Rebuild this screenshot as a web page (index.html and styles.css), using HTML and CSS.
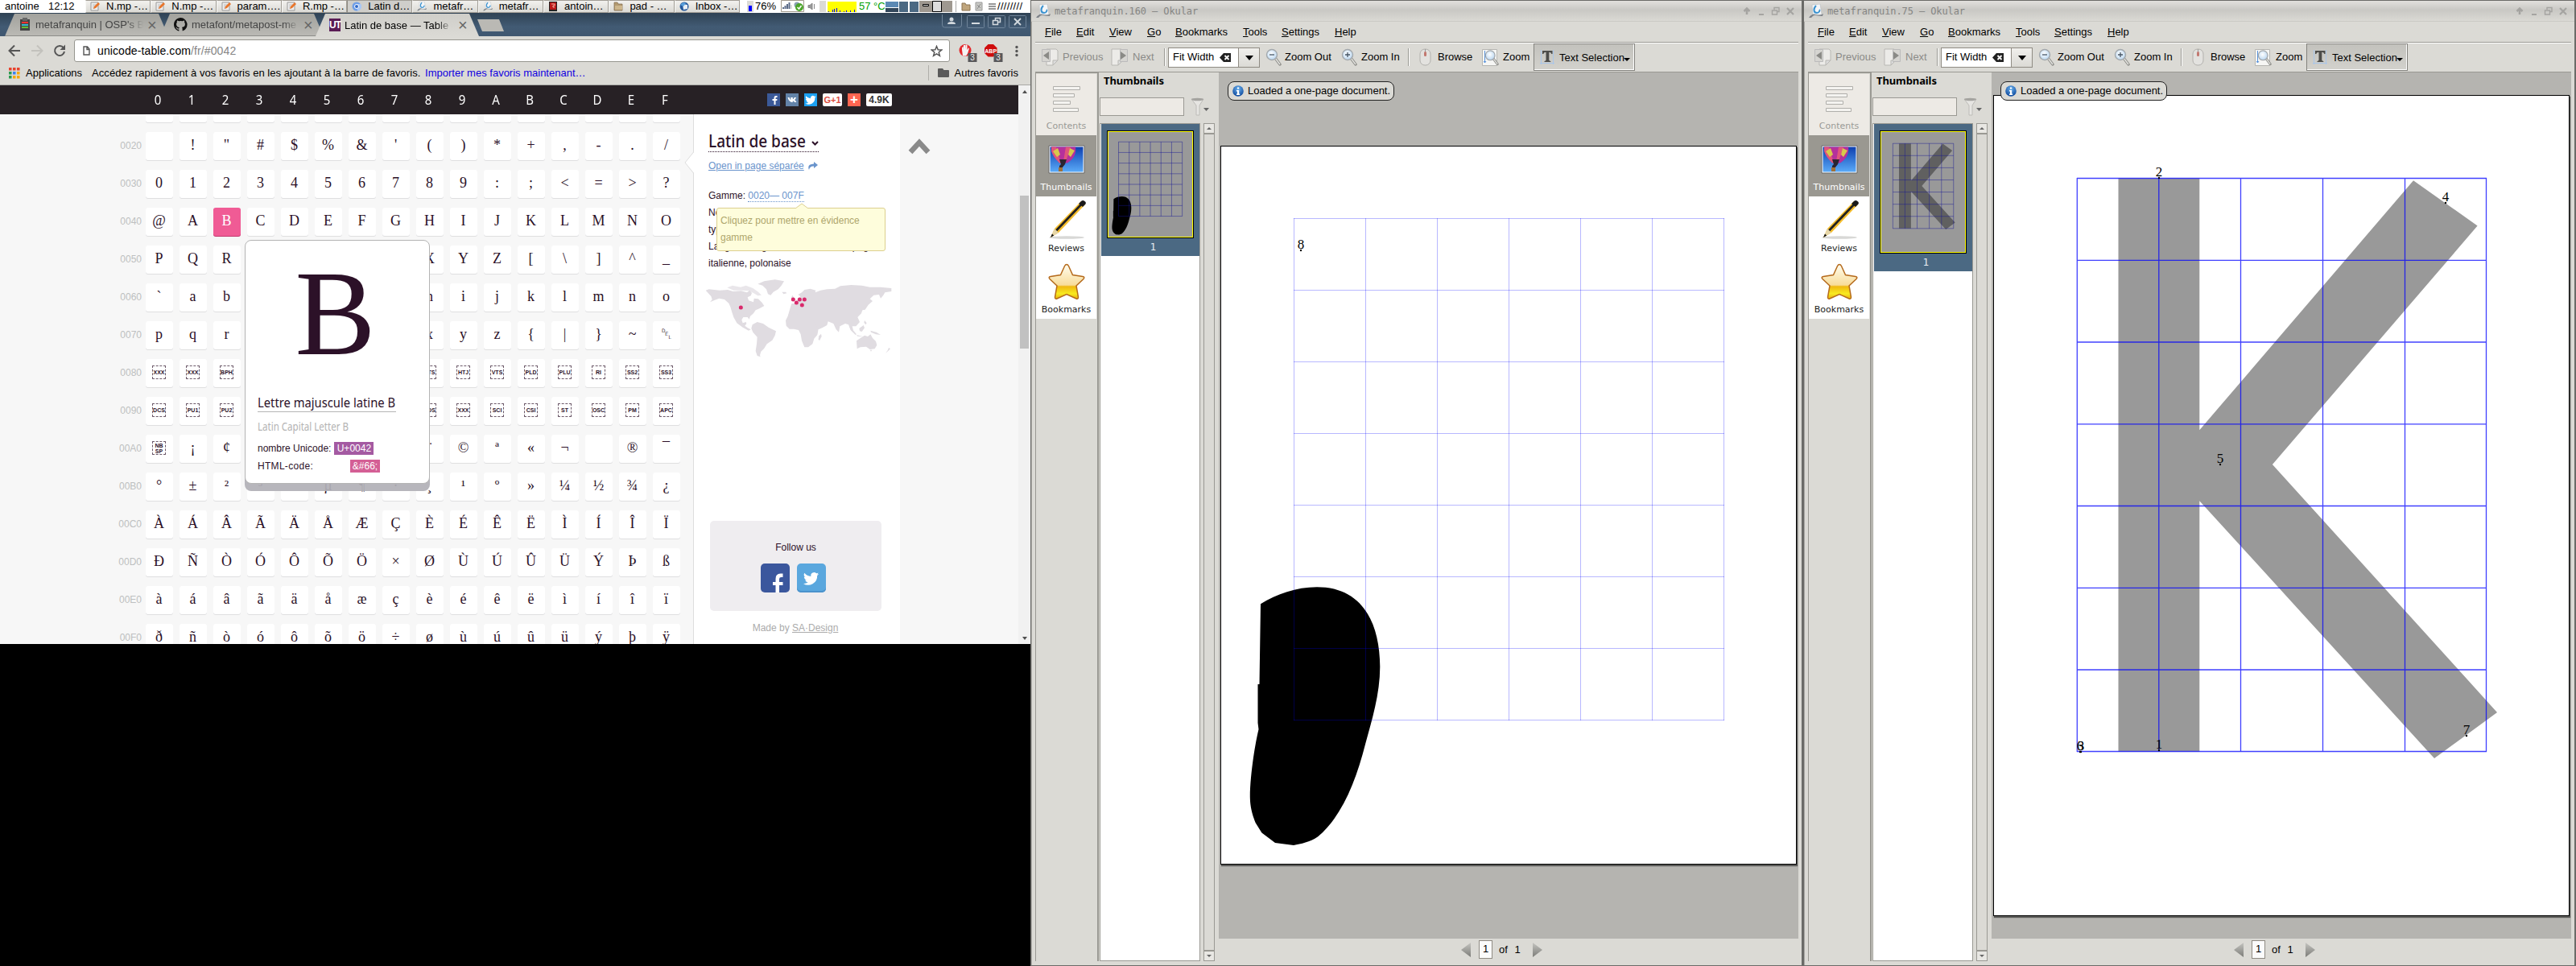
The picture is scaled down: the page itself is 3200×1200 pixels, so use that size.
FILE: index.html
```
<!DOCTYPE html>
<html lang="fr">
<head>
<meta charset="utf-8">
<title>Latin de base — Table</title>
<link rel="stylesheet" href="styles.css">
</head>
<body>
<svg class="defs" width="0" height="0">
  <defs>
    <linearGradient id="sky" x1="0" y1="0" x2="0" y2="1"><stop offset="0" stop-color="#0d3fb0"/><stop offset="1" stop-color="#5aaaf8"/></linearGradient>
    <linearGradient id="gold" x1="0" y1="0" x2="0" y2="1"><stop offset="0" stop-color="#fffdf0"/><stop offset=".6" stop-color="#f8dc9a"/><stop offset=".64" stop-color="#f0b810"/><stop offset=".85" stop-color="#f8ea20"/><stop offset="1" stop-color="#e8b010"/></linearGradient>
    <linearGradient id="steel" x1="0" y1="0" x2="0" y2="1"><stop offset="0" stop-color="#c4c4c0"/><stop offset="1" stop-color="#7c7c78"/></linearGradient>
    <radialGradient id="blue" cx=".5" cy=".3" r=".7"><stop offset="0" stop-color="#6cb2ee"/><stop offset="1" stop-color="#0c479c"/></radialGradient>
    <radialGradient id="lens" cx=".45" cy=".4" r=".6"><stop offset="0" stop-color="#fff"/><stop offset="1" stop-color="#b9d6f0"/></radialGradient>
  </defs>
  <symbol id="i-note" viewBox="0 0 12 12"><path d="M1 1h9v10H1z" fill="#eee" stroke="#999"/><path d="M3 4h5M3 6h4M3 8h3" stroke="#bbb"/><path d="M4 9l1-3 5-5 2 2-5 5z" fill="#e8762c"/></symbol>
  <symbol id="i-chromium" viewBox="0 0 12 12"><circle cx="6" cy="6" r="5.5" fill="#6f9fe8"/><path d="M6 3h5.2A5.5 5.5 0 0 1 7 11.4z" fill="#a9c8f5"/><circle cx="6" cy="6" r="2.5" fill="#3169c6" stroke="#fff"/></symbol>
  <symbol id="i-okular" viewBox="0 0 18 18"><path d="M4 1l10-1 2 13-11 1z" fill="#f4f6f8" stroke="#b8bcc0" stroke-width=".6"/><path d="M9 2C5 6 6 11 10 11c3 0 4-3 3-4" fill="none" stroke="#3c93cf" stroke-width="2"/><path d="M0 17q4-6 9-4t9-1l-1 3q-5 0-8-1t-6 3z" fill="#7d8288"/></symbol>
  <symbol id="i-red" viewBox="0 0 12 12"><path d="M1 0h10v12H1z" fill="#222"/><path d="M2 1h8v9H2z" fill="#b91818"/><path d="M4 3h4v2H6v2h2" stroke="#f7b0a0" fill="none"/></symbol>
  <symbol id="i-folder" viewBox="0 0 12 12"><path d="M1 1h4l1 2h5v8H1z" fill="#b39a70" stroke="#80694a" stroke-width=".7"/><path d="M2 5h9v5H2z" fill="#cdb68c"/></symbol>
  <symbol id="i-bird" viewBox="0 0 12 12"><circle cx="6" cy="6" r="5.5" fill="#24589c"/><path d="M4 3l6 1v5l-5 1z" fill="#e8eef5"/><path d="M1 4q3-4 7-2L5 6z" fill="#5aa0dc"/></symbol>
  <symbol id="i-tw" viewBox="0 0 24 24"><path fill="#fff" d="M22 6.2c-.7.3-1.500.5-2.300.6.8-.5 1.500-1.300 1.800-2.200-.8.5-1.700.8-2.600 1a4.100 4.100 0 0 0-7 3.700C8.500 9.100 5.500 7.500 3.500 5a4.100 4.100 0 0 0 1.300 5.500c-.7 0-1.300-.2-1.900-.5 0 2 1.400 3.700 3.300 4.100-.6.2-1.200.2-1.900.1.5 1.600 2 2.800 3.800 2.800A8.300 8.300 0 0 1 2 18.700 11.700 11.700 0 0 0 20 8.300c.8-.6 1.500-1.300 2-2.100z"/></symbol>
  <symbol id="i-zoom" viewBox="0 0 20 22"><path d="M12 12l6 8" stroke="#8c8c88" stroke-width="3.400" stroke-linecap="round"/><path d="M12 12l6 8" stroke="#e4e4e0" stroke-width="1.400"/><circle cx="8" cy="8" r="6.500" fill="url(#lens)" stroke="#a3a8ac" stroke-width="1.400"/></symbol>
  <symbol id="i-k-draw" viewBox="0 0 714 1018">
    <path class="ink" d="M154.500 102.500H255.300V415.200L521 105.300 600.600 161.500 345.900 458 625 765.900 547 823.100 255.300 503.200V814.500H154.500z"/>
    <path class="rules" d="M103 102.500H612M103 204.300H612M103 306H612M103 407.800H612M103 509.500H612M103 611.300H612M103 713H612M103 814.500H612M103.300 102V815M204.800 102V815M306.500 102V815M408.500 102V815M510.500 102V815M611.500 102V815"/>
  </symbol>
  <symbol id="i-blob-draw" viewBox="0 0 714 891">
    <path class="ink" d="M49 568.300C69 556 93 547.300 119 547.300c54 0 78 41 78.300 99 0 34-10.300 67-18 95.300-12.300 48.700-30.300 91.700-59.100 115.700-10.200 7-21.200 9-30.200 10.700L67 865 50.400 852.600 42.600 840C37 826 36 817 35.800 808 36 778 43 738 46.500 724L45.500 716V668H47.500z"/>
    <path class="rules" d="M90 89.500H625M90 178.500H625M90 267.500H625M90 356.500H625M90 445.500H625M90 534.500H625M90 623.500H625M90 712.500H625M90.500 89V713M179.500 89V713M268.500 89V713M357.500 89V713M446.500 89V713M535.500 89V713M624.500 89V713"/>
  </symbol>
</svg>

<main class="desktop">
  <section class="browser">
    <header class="taskbar">
      <span class="user">antoine</span><span class="clock">12:12</span>
      <nav class="tasks">
        <span class="task"><svg><use href="#i-note"/></svg>N.mp -…</span>
        <span class="task"><svg><use href="#i-note"/></svg>N.mp -…</span>
        <span class="task"><svg><use href="#i-note"/></svg>param….</span>
        <span class="task"><svg><use href="#i-note"/></svg>R.mp -…</span>
        <span class="task on"><svg><use href="#i-chromium"/></svg>Latin d…</span>
        <span class="task"><svg><use href="#i-okular"/></svg>metafr…</span>
        <span class="task"><svg><use href="#i-okular"/></svg>metafr…</span>
        <span class="task"><svg><use href="#i-red"/></svg>antoin…</span>
        <span class="task"><svg><use href="#i-folder"/></svg>pad - …</span>
        <span class="task"><svg><use href="#i-bird"/></svg>Inbox -…</span>
      </nav>
      <span class="battery"></span><span class="pct">76%</span>
      <svg class="net" width="46" height="16" viewBox="0 0 46 16"><path d="M.5.500h28v14H.5z" fill="#fff" stroke="#a19a8c"/><path d="M3 11V9M5.500 11V7M8 11V5M10.500 11V3" stroke="#5c6c88" stroke-width="2"/><path d="M13 11V6" stroke="#bbb"/><circle cx="20" cy="6" r="3.500" fill="#8aa0b4"/><circle cx="23" cy="9" r="5" fill="#4da52c"/><path d="M20.500 9l2 2 3-4" stroke="#fff" fill="none" stroke-width="1.500"/><path d="M34 6.500h2l3-2.500v8l-3-2.500h-2zM41.500 5v6" fill="#999" stroke="#888"/></svg>
      <span class="meter"></span>
      <svg class="cpu" width="36" height="13" viewBox="0 0 36 13"><path fill="#ff0" d="M0 0h36v13H0z"/><path d="M1.500 12v1M6.500 10v3M8.500 9v4M11.500 8v5M15.500 11v2M20.500 12v1M23.500 11v2M28.500 11v2M33.500 10v3" stroke="#00f"/></svg>
      <span class="temp">57 °C</span>
      <svg class="pager" width="84" height="16" viewBox="0 0 84 16"><path fill="#5b89b4" d="M0 2h16v7H0z"/><path fill="#33475b" d="M0 10h16v5H0z"/><path fill="#4b6983" d="M17 2h11v13H17zM30 2h11v13H30z"/><path fill="#9e9890" d="M42 1h41v14H42z"/><path d="M46.500 5.500h7v2h-7z" fill="#ddd" stroke="#000"/><path d="M58.500 1.500h11v13h-11z" fill="#ddd" stroke="#000"/></svg>
      <svg class="tray" width="54" height="14" viewBox="0 0 54 14"><path d="M1.500 0v14" stroke="#aaa"/><path d="M9 3h4l1 2h5v7H9z" fill="#bfa57c" stroke="#8a7350"/><path d="M26 2h8v10h-8z" fill="#c8c8c4" stroke="#999"/><path d="M28 5l4 4M32 4l-4 6" stroke="#888"/><path d="M42 4h9M42 7h9M42 10h9" stroke="#777" stroke-width="1.700"/></svg>
      <span class="slashes">////////</span>
    </header>

    <div class="tabs">
      <div class="tab t1"><svg width="16" height="17" viewBox="0 0 16 17"><path d="M2 2h12v14H2z" fill="#444"/><path d="M5 0h6v4H5z" fill="#666"/><path d="M4 6h8" stroke="#e33" stroke-width="2"/><path d="M4 9h8" stroke="#3bc" stroke-width="2"/><path d="M4 12h8" stroke="#6b3" stroke-width="2"/></svg><span>metafranquin | OSP's B</span><i>×</i></div>
      <div class="tab t2"><svg width="17" height="17" viewBox="0 0 16 16"><path d="M8 0C3.600 0 0 3.600 0 8c0 3.500 2.300 6.500 5.500 7.600.4.100.5-.2.500-.4v-1.500c-2.200.5-2.700-1-2.700-1-.4-.9-.9-1.200-.9-1.200-.7-.5.1-.5.1-.5.8.1 1.200.8 1.200.8.7 1.300 1.900.9 2.300.7.1-.5.300-.9.500-1.100-1.800-.2-3.600-.9-3.600-4 0-.9.300-1.600.8-2.100-.1-.2-.4-1 .1-2.100 0 0 .7-.2 2.200.8a7.600 7.600 0 0 1 4 0c1.500-1 2.200-.8 2.200-.8.4 1.100.2 1.900.1 2.100.5.6.8 1.300.8 2.100 0 3.100-1.900 3.700-3.700 3.900.3.300.6.800.6 1.500v2.200c0 .2.100.5.600.4A8 8 0 0 0 8 0z" fill="#111"/></svg><span>metafont/metapost-me</span><i>×</i></div>
      <div class="tab t3"><b class="ut">UT</b><span>Latin de base — Table</span><i>×</i></div>
      <div class="newtab"></div>
      <div class="wbtns">
        <svg width="106" height="20" viewBox="0 0 106 20"><g fill="none" stroke="#70859a"><path d="M.5 0v13q0 3 3 3h18q3 0 3-3V0"/><rect x="31.500" y="1.500" width="21" height="15" rx="1"/><rect x="57.500" y="1.500" width="21" height="15" rx="1"/><rect x="83.500" y="1.500" width="21" height="15" rx="1"/></g><circle cx="12" cy="6" r="2.500" fill="#d0d6dc"/><path d="M7 12q0-3 5-3t5 3z" fill="#d0d6dc"/><path d="M37 11h10" stroke="#d5dbe0" stroke-width="2"/><path d="M63.500 7.500h6v5h-6zM66.500 7V4.500h6v5H70" fill="none" stroke="#d5dbe0" stroke-width="1.500"/><path d="M90 5l8 8M98 5l-8 8" stroke="#d5dbe0" stroke-width="1.800"/></svg>
      </div>
    </div>

    <div class="toolbar">
      <svg class="nav" width="92" height="32" viewBox="0 0 92 32"><g fill="none" stroke-width="2"><path d="M25 18H12M18 11.500L11.500 18l6.500 6.500" stroke="#555"/><path d="M39 18h13M46 11.500l6.500 6.500-6.500 6.500" stroke="#c3c2bd"/><path d="M79 14.500A6 6 0 1 0 80 19" stroke="#555"/></g><path d="M81 10.500v6.500h-6.500z" fill="#555"/></svg>
      <div class="urlbar">
        <svg width="9" height="12" viewBox="0 0 9 12"><path d="M1 1h4.500L8 4v7H1zM5 1v3.500h3" fill="none" stroke="#555" stroke-width="1.400"/></svg>
        <span>unicode-table.com<em>/fr/#0042</em></span>
        <svg class="fav" width="15" height="15" viewBox="0 0 15 15"><path d="M7.500 1.500l1.700 4.200 4.500.3-3.500 2.900 1.200 4.400-3.900-2.500-3.900 2.500 1.200-4.400L1.300 6l4.500-.3z" fill="none" stroke="#555" stroke-width="1.500"/></svg>
      </div>
      <svg class="exts" width="100" height="32" viewBox="0 0 100 32"><circle cx="19" cy="17.500" r="7.500" fill="#e3282c"/><path d="M15 17v-3l1.500-1V17l.500-6h2v5l.5-5.500h2V17l1.500-2.500 1 .5-2 6.500-2 3h-4z" fill="#f4f4f4"/><path d="M22.500 21h11v11h-11z" fill="#58585a"/><path d="M47.500 10h6.500l4.500 4.500V21L54 25.500h-6.500L43 21v-6.500z" fill="#cf0c0c"/><text x="50.700" y="20.500" font-size="7" text-anchor="middle" class="abp">ABP</text><path d="M54.500 21h11v11h-11z" fill="#58585a"/><text x="25.300" y="30" class="cnt">3</text><text x="57.300" y="30" class="cnt">3</text><g fill="#555"><circle cx="83" cy="13.500" r="1.700"/><circle cx="83" cy="18.500" r="1.700"/><circle cx="83" cy="23.500" r="1.700"/></g></svg>
    </div>

    <div class="bookmarks">
      <svg width="14" height="14" viewBox="0 0 14 14"><path fill="#e8432e" d="M0 0h3.500v3.500H0zM5 0h3.500v3.500H5zM10 0h3.500v3.500H10z"/><path fill="#2a9a4e" d="M0 5h3.500v3.500H0zM0 10h3.500v3.500H0z"/><path fill="#3a82f0" d="M5 5h3.500v3.500H5z"/><path fill="#f6a800" d="M10 5h3.500v3.500H10zM5 10h3.500v3.500H5zM10 10h3.500v3.500H10z"/></svg>
      <span class="apps">Applications</span><span class="hint">Accédez rapidement à vos favoris en les ajoutant à la barre de favoris.</span><a>Importer mes favoris maintenant…</a>
      <span class="others"><svg width="14" height="13" viewBox="0 0 14 13"><path d="M0 2q0-1 1-1h5l1.500 2H13q1 0 1 1v7q0 1-1 1H1q-1 0-1-1z" fill="#5a5a5a"/></svg>Autres favoris</span>
    </div>

    <div class="viewport">
      <div class="site">
        <header class="hexbar">
          <div class="hex" id="hex"></div>
          <div class="share">
            <span class="s-fb"><svg width="16" height="16" viewBox="0 0 16 16"><path d="M8.500 14V9H6.500V7h2V5.300Q8.500 3 11 3h1.500v2h-1.200q-.8 0-.8.800V7h2l-.3 2h-1.700v5z" fill="#fff"/></svg></span>
            <span class="s-vk"><svg width="16" height="16" viewBox="0 0 16 16"><path d="M2.500 5h2q1 3 1.800 3.200V5h2.500v2.600Q9.900 7 10.800 5h2.200q-.5 1.800-1.900 3.100 1.500 1 2.300 2.900H11q-.8-1.600-2.200-1.800V11Q4 11 2.500 5z" fill="#fff"/></svg></span>
            <span class="s-tw"><svg width="16" height="16"><use href="#i-tw"/></svg></span>
            <span class="s-g">G+1</span><span class="s-plus">+</span><span class="s-count">4.9K</span>
          </div>
        </header>
        <div class="content">
          <div class="table" id="table"></div>
          <aside class="side">
            <svg class="notch" width="12" height="26" viewBox="0 0 12 26"><path d="M12 0L1 13l11 13z" fill="#fff"/><path d="M11.500 0L1 13l10.500 13" fill="none" stroke="#ddd"/></svg>
            <svg class="h-title" width="160" height="26"><text x="0" y="20" font-size="22.500" textLength="121" lengthAdjust="spacingAndGlyphs">Latin de base</text><path d="M129 13l3.500 3.500L136 13" fill="none" stroke="#2c1128" stroke-width="2"/><path d="M0 25.500h137" stroke="#2c1128" stroke-dasharray="1 1"/></svg>
            <p class="open"><a>Open in page séparée</a><svg width="12" height="11" viewBox="0 0 12 11"><path d="M7 0l5 4-5 4V5.500Q2 5 1 10-2 3 7 2.500z" fill="#6a94cc"/></svg></p>
            <p class="info">Gamme: <a>0020— 007F</a><br>Nombre de caractères: 96<br>type: alphabet<br>Langues: anglaise, allemande, espag<br>italienne, polonaise</p>
            <div class="tip"><svg width="16" height="7" viewBox="0 0 16 7"><path d="M0 7l8-6 8 6" fill="#fefddc" stroke="#dccf8e"/></svg>Cliquez pour mettre en évidence gamme</div>
            <svg class="map" width="240" height="100" viewBox="30 592 720 300">
              <g fill="#e0dce1">
                <path d="M50 636l12-4 40 4 30-2 20 6 30-2 22 6 10-8 8 10-4 10-12 6 4 12 18 6 2-14 16 2 14 14 8 12-18 10-14 6-8 12-12 10-4 12-6-8-16 0-6 10 4 12 12-4 2 6-6 8 10 8 12 6-8 4-22-12-22-16-12-22-6-18-6-20-6-14-16-14-20-4-16 6-18 8 8-10-4-12z"/>
                <path d="M130 626l20-8 30 6 20-6 26 10 20 14 12 12-14 2-16-10-18-8-30-2-26 0z" opacity=".7"/>
                <path d="M244 612l24-10 40-6 34 6-10 16-12 14-18 10-10 12-10-4-6-18-14-14z"/>
                <path d="M334 642l14 0 4 5-12 3z"/>
                <path d="M224 764l18-10 22 6 20 14 28 14-4 16-10 18-20 14-10 16-12 12-4 14 2 6-12-4-6-18 4-26 2-26-16-18-6-14z"/>
                <path d="M366 712l22-8 24 2 22 12 24-2 8 14 12 18 18-2-6 14-20 20-4 22-12 14-6 20-16 12-14 0-10-24-4-24-8-16-18-4-16 0-12-12-2-20z"/>
                <path d="M472 806l8-8 2 10-8 16-4-6z"/>
                <path d="M366 698l4-12 14-2 6-10 14-10-4-8-6-4 14-8 10-10 22-4 20 6-2 8 20-8 24-4 30-2 20-10 40-4 40 2 30 6 40 0 40 4 0 12-24 4-6 10-10 12-6-14-20 2-14 14 10 8-16 14-12 18-10 2-4 12-14 14 8 18-14 16-14 0 6 24-12-10-8-20-12-4-20 10-4 22-10-10-10-22-20-8-4 14-18 10-14 6-12-24-10-12-6-8-20-4 0-10-12 0-10 8-8-6-10-8-12 6-14 8z"/>
                <path d="M368 664l6-10 8 18-10 4z"/>
                <path d="M584 768l20 22 8 10-4 2-16-16zM612 802l24 6-20-1zM622 778l16-12 4 10-10 14-8-2zM664 786l22 6 16 10-18-2-18-8zM642 748l8 10-4 6-6-8z"/>
                <path d="M612 824l18-12 12-8 12 4 10-8 8 14 12 12 4 14-8 14-18 2-14-10-22 2-12 6z"/>
                <path d="M662 858l8 0-4 6zM732 850l6 4-8 8-10 8 8-10zM630 712l14-10 4-14-6 4z"/>
              </g>
              <g fill="#d92a6c"><circle cx="181" cy="700" r="7.500"/><circle cx="376" cy="670" r="7.500"/><circle cx="400" cy="670" r="7.500"/><circle cx="418" cy="670" r="7.500"/><circle cx="388" cy="682" r="7.500"/><circle cx="409" cy="691" r="7.500"/></g>
            </svg>
            <div class="follow"><p>Follow us</p><div class="fbtns">
              <span class="f-fb"><svg width="36" height="36" viewBox="0 0 36 36"><path d="M18.500 36V27H15v-4h3.500v-4q0-6.500 6-6.500h3V17h-2q-2.500 0-2.500 2.300V23h4.500v4H23v9z" fill="#fff"/></svg></span>
              <span class="f-tw"><svg width="23" height="23"><use href="#i-tw"/></svg></span></div></div>
            <p class="made">Made by <a>SA·Design</a></p>
          </aside>
          <svg class="totop" width="28" height="20" viewBox="0 0 28 20"><path d="M3 17L14 5l11 12" fill="none" stroke="#8a8a8a" stroke-width="6.500"/></svg>
        </div>
        <div class="popup">
          <div class="big">B</div>
          <svg class="p-title" width="172" height="24"><text x="0" y="18" font-size="17" textLength="171" lengthAdjust="spacingAndGlyphs">Lettre majuscule latine B</text><path d="M0 23.500h172" stroke="#b5b5b5"/></svg>
          <svg class="p-sub" width="172" height="22"><text x="0" y="17" font-size="14.500" textLength="113" lengthAdjust="spacingAndGlyphs">Latin Capital Letter B</text></svg>
          <p><span>nombre Unicode:</span><b class="uni">U+0042</b></p>
          <p><span class="lbl">HTML-code:</span><b class="ent">&amp;#66;</b></p>
        </div>
      </div>
      <div class="scroll"><i class="up"></i><i class="thumb"></i><i class="down"></i></div>
    </div>
  </section>
  <section class="okular" data-name="metafranquin.160" data-doc="blob"></section>
  <section class="okular" data-name="metafranquin.75" data-doc="k"></section>
</main>
<script src="app.js"></script>
</body>
</html>
```
FILE: styles.css
```
* { box-sizing: border-box; }
body { margin: 0; background: #000; font: 13px "Liberation Sans", Arial, sans-serif; color: #000; overflow: hidden; }
p { margin: 0; }
svg { display: block; flex: none; }
.defs { position: absolute; }
.desktop { display: flex; width: 3200px; height: 1200px; align-items: flex-start; white-space: nowrap; }

/* taskbar */
.browser { width: 1280px; height: 800px; display: flex; flex-direction: column; overflow: hidden; flex: none; }
.taskbar { height: 16px; background: #fff; display: flex; align-items: center; flex: none; line-height: 16px; }
.user { width: 60px; padding-left: 6px; }
.clock { width: 46px; }
.tasks { display: flex; width: 813px; }
.task { flex: 1; min-width: 0; height: 16px; line-height: 14px; background: linear-gradient(#f2f1ee, #dbdad5); border: 1px solid #a19d95; border-left-color: #f8f8f6; display: flex; align-items: center; padding-left: 5px; gap: 8px; overflow: hidden; }
.task svg { width: 12px; height: 12px; }
.task.on { background: #cfceca; border-left-color: #8f8b83; }
.battery { width: 8px; height: 14px; margin-left: 9px; background: linear-gradient(#00f, #00f) 2px 6px / 4px 7px no-repeat #dbdad5; }
.pct { width: 35px; padding-left: 2px; }
.net { margin-left: -1px; }
.meter { width: 8px; height: 14px; background: #dbdad5; margin-left: 2px; }
.cpu { margin-left: 2px; margin-top: 1px; }
.temp { color: #00a000; padding-left: 3px; width: 36px; }
.tray { margin-left: 2px; }
.slashes { letter-spacing: 0.300px; margin-left: -1px; }

/* tabs */
.tabs { height: 29px; background: linear-gradient(#2f4254, #425b74 60%, #3f5770); display: flex; flex: none; padding-left: 6px; position: relative; }
.tab { display: flex; align-items: center; height: 28px; margin-top: 1px; width: 206px; padding: 0 20px 0 17px; margin-right: -13px; clip-path: polygon(0 100%, 12px 0, 191px 0, 203px 100%); background: linear-gradient(#a2a29d, #bab9b4); color: #444; border-bottom: 1px solid #8c8c88; }
.tab span { width: 134px; overflow: hidden; margin-left: 5px; flex: none; mask-image: linear-gradient(90deg, #000 85%, transparent); }
.tab i { font: 20px/20px "Liberation Sans", sans-serif; color: #666; margin-left: 5px; }
.t3 { background: linear-gradient(#cfcec9, #dbdad5); color: #000; border: 0; z-index: 2; }
.t3 i { margin-left: 7px; }
.ut { width: 16px; height: 16px; background: #5a1c55; color: #fff; font-size: 12px; line-height: 16px; text-align: center; letter-spacing: -1px; }
.newtab { width: 35px; height: 15px; margin: 8px 0 0 8px; background: #bab9b4; clip-path: polygon(0 0, 27px 0, 33px 100%, 6px 100%); }
.wbtns { margin: 2px 4px 0 auto; }

/* toolbar */
.toolbar { height: 33px; background: #dbdad5; display: flex; flex: none; }
.nav { margin-top: 0; }
.urlbar { width: 1088px; height: 28px; margin-top: 4px; background: #fff; border: 1px solid #96968f; border-radius: 3px; display: flex; align-items: center; font-size: 14px; padding: 0 8px 0 10px; line-height: 26px; }
.urlbar span { margin-left: 9px; letter-spacing: .1px; }
.urlbar em { font-style: normal; color: #858585; }
.fav { margin-left: auto; }
.abp { fill: #fff; font-weight: bold; }
.cnt { fill: #eee; font-size: 10px; }
.bookmarks { height: 28px; background: #dbdad5; border-bottom: 1px solid #a8a8a4; display: flex; align-items: center; padding: 0 15px 2px 11px; flex: none; }
.apps { margin: 0 12px 0 7px; }
.hint { width: 409px; letter-spacing: .04px; }
.bookmarks a { color: #1000e0; margin-left: 5px; }
.others { margin-left: auto; height: 19px; display: flex; align-items: center; gap: 7px; border-left: 1px solid #b0afaa; padding-left: 11px; }

/* site */
.viewport { flex: 1; display: flex; min-height: 0; }
.site { width: 1265px; background: #f7f7f7; position: relative; overflow: hidden; display: flex; flex-direction: column; }
.hexbar { height: 36px; background: #272125; display: flex; align-items: center; flex: none; position: relative; z-index: 1; }
.hex { display: flex; padding-left: 175px; width: 953px; color: #fff; font: 17px/34px "Noto Sans", sans-serif; }
.hex span { width: 42px; text-align: center; transform: scaleX(.88); }
.share { display: flex; height: 16px; line-height: 16px; margin-top: -1px; }
.share span { width: 16px; margin-right: 7px; text-align: center; font-weight: bold; }
.s-fb { background: #3b5998; } .s-vk { background: #6383a8; } .s-tw { background: #1da1f2; }
.share .s-g { width: 24px; background: #fff; color: #dc4e41; border-radius: 2px; font-size: 11px; }
.s-plus { background: #ff6550; color: #fff; font-size: 17px; }
.share .s-count { width: 32px; background: #fff; color: #333; border-radius: 2px; font-size: 12px; }
.content { display: flex; flex: 1; }
.table { width: 861px; margin-top: -25px; display: flex; flex-direction: column; gap: 11px; }
.row { display: flex; gap: 8px; height: 36px; }
.row > span { width: 176px; margin-right: -3px; text-align: right; color: #bdbfc0; font-size: 12px; line-height: 34px; }
.row > b { width: 34px; height: 35px; background: #fff; border-radius: 3px; box-shadow: 0 1px 0 #dfdfe0; font: 18px/33px "Liberation Serif", serif; color: #2c1128; text-align: center; padding-right: 1px; }
.row > b.on { background: #f05b95; color: #fff; box-shadow: 0 1px 0 #c23a70; }
.row > b.ctl { display: flex; align-items: center; justify-content: center; padding: 0 1px 2px 0; }
.ctl i { width: 17px; height: 17px; border: 1px dashed #6d5a6a; font: bold 7px/15px "Liberation Sans", sans-serif; display: flex; align-items: center; justify-content: center; }
.ctl i.two { line-height: 7px; white-space: normal; }
.side { width: 257px; background: #fff; border-left: 1px solid #ddd; position: relative; color: #2c1128; font-size: 12px; padding-left: 18px; }
.notch { position: absolute; left: -12px; top: 47px; }
.h-title { margin-top: 21px; fill: #2c1128; font-family: "Noto Sans", sans-serif; font-weight: 500; }
.side a { color: #6a94cc; }
.open { display: flex; line-height: 20px; margin-top: 7px; gap: 5px; align-items: center; }
.open a, .made a { text-decoration: underline; }
.info { line-height: 21px; margin-top: 17px; }
.info a { border-bottom: 1px dotted #6a94cc; }
.tip { position: absolute; left: 28px; top: 116px; width: 210px; height: 54px; padding: 5px 4px; background: #fefddc; border: 1px solid #dccf8e; border-radius: 3px; color: #aea66c; line-height: 21px; white-space: normal; }
.tip svg { position: absolute; left: 97px; top: -7px; }
.map { margin: 8px 0 0 -10px; }
.follow { margin: 201px 0 0 2px; width: 213px; height: 112px; background: #efedf0; border-radius: 5px; text-align: center; padding-top: 22px; }
.follow p { line-height: 22px; }
.fbtns { display: flex; gap: 9px; justify-content: center; margin: 9px 7px 0 0; }
.fbtns span { width: 36px; height: 36px; border-radius: 5px; display: flex; align-items: center; justify-content: center; overflow: hidden; }
.f-fb { background: #3b579d; }
.f-tw { background: #5aa7de; box-shadow: inset 0 -2px 0 #4b93cc; }
.made { text-align: center; margin: 10px 22px 0 0; line-height: 22px; color: #ababab; }
.side .made a { color: #ababab; }
.totop { margin: 30px 0 0 10px; }
.popup { position: absolute; left: 304px; top: 192px; width: 230px; height: 303px; background: #fff; border: 1px solid #b4b4b4; border-radius: 8px; box-shadow: 0 9px 0 rgba(178,176,183,.93); padding: 0 15px; color: #2c1128; font-size: 12px; }
.popup svg { font-family: "Noto Sans", sans-serif; fill: #2c1128; }
.big { height: 181px; line-height: 180px; font-family: "Liberation Serif", serif; font-size: 150px; text-align: center; padding-right: 5px; }
.p-title { margin-top: 8px; }
.popup .p-sub { fill: #b3b3b3; margin-top: 6px; }
.popup p { display: flex; align-items: center; height: 22px; margin-top: 6px; }
.popup p + p { margin-top: 0; }
.popup b { font-weight: normal; color: #fff; line-height: 16px; height: 16px; text-align: center; margin-left: 4px; width: 49px; }
.uni { background: #a45aa2; }
.popup .ent { background: #d45f95; width: 37px; margin-left: 0; }
.lbl { width: 115px; letter-spacing: 0.300px; }
.scroll { width: 15px; background: #f1f1f1; display: flex; flex-direction: column; align-items: center; }
.up, .down { border: 3.500px solid transparent; width: 0; }
.up { border-bottom: 4px solid #505050; border-top: 0; margin-top: 6px; }
.thumb { width: 11px; height: 190px; background: #c1c1c1; margin-top: 127px; }
.down { border-top: 4px solid #505050; border-bottom: 0; margin-top: auto; margin-bottom: 5px; }

/* document viewer */
.okular { width: 960px; height: 1200px; background: #dbdad5; border: 1px solid #6b6b68; border-right-width: 2px; padding-left: 5px; display: flex; flex-direction: column; flex: none; box-shadow: inset 1px 0 0 #a9a8a4; }
.title { height: 26px; margin-left: -5px; padding: 0 9px 0 6px; background: linear-gradient(#e2e0dd, #c9c8c4 45%, #dad9d4); border-bottom: 1px solid #cbcac5; display: flex; align-items: center; gap: 5px; font: 12px/26px "DejaVu Sans Mono", monospace; letter-spacing: -.1px; color: #858583; flex: none; }
.title .wm { margin-left: auto; }
.menu { height: 26px; display: flex; padding-left: 12px; margin-right: 4px; border-bottom: 1px solid #9a9993; box-shadow: 0 1px 0 #fff; line-height: 25px; flex: none; }
.menu span { display: block; }
.menu span::first-letter { text-decoration: underline; }
.tools { height: 37px; display: flex; align-items: center; border-bottom: 1px solid #9a9993; margin-right: 4px; flex: none; line-height: 34px; }
.tools .dim { color: #8b8b88; }
.sep { width: 1px; height: 22px; background: #9a9993; box-shadow: 1px 0 0 #fff; }
.combo { width: 114px; height: 25px; border: 1px solid #8f8b83; display: flex; background: #fff; align-items: center; line-height: 22px; padding-left: 5px; margin-left: 4px; }
.combo svg { margin-left: 7px; }
.combo i { width: 26px; height: 23px; margin-left: auto; background: linear-gradient(#f0efec, #dbdad5); border-left: 1px solid #8f8b83; }
.combo i::after { content: ""; display: block; margin: 9px 0 0 8px; width: 0; border: 5px solid transparent; border-top: 6px solid #000; border-bottom: 0; }
.textsel { width: 126px; height: 34px; border: 1px solid #84837e; background: linear-gradient(#c3c2bd, #d3d2cd); box-shadow: inset -1px -1px 0 #fff; display: flex; align-items: center; line-height: 31px; padding-left: 7px; margin-left: 5px; }
.textsel span { margin-left: 6px; }
.textsel i { width: 0; border: 4px solid transparent; border-top: 4px solid #000; border-bottom: 0; margin: 5px 0 0 -1px; }
.body { flex: 1; display: flex; min-height: 0; margin-right: 4px; }
.modes { width: 79px; border: 1px solid #9a9993; border-bottom: 0; border-right: 2px solid #9a9993; padding: 1px 1px 0 0; margin-bottom: 5px; }
.mode { height: 76px; width: 75px; background: #fff; font: 11px "DejaVu Sans", sans-serif; display: flex; flex-direction: column; justify-content: space-between; align-items: center; padding-bottom: 4px; line-height: 14px; color: #222; }
.mode.off { background: #edeae5; color: #9a9a96; }
.mode.sel { background: #9a9891; color: #fff; }
.pane { width: 144px; padding-left: 1px; display: flex; flex-direction: column; }
.pane h3 { margin: 0; font: bold 13px/20px "Noto Sans", sans-serif; padding-left: 5px; height: 31px; letter-spacing: -.1px; }
.filter { display: flex; height: 32px; gap: 8px; }
.filter i { width: 105px; height: 23px; background: #edeae5; border: 1px solid #9a9993; }
.lists { display: flex; gap: 4px; flex: 1; margin-bottom: 5px; }
.list { width: 125px; background: #fff; border: 1px solid #9a9993; }
.item { background: #4b6983; margin-left: 1px; width: 122px; padding: 8px 0 0 7px; color: #e8edf2; text-align: center; font: 12px/22px "DejaVu Sans", sans-serif; }
.item svg { width: 108px; border: 1px solid #000; outline: 1px solid #ff0; outline-offset: -2px; background: #999; }

/* page drawings, shared between the page and its thumbnail */
.ink { fill: var(--ink); }
.rules { fill: none; stroke: var(--rule); stroke-width: var(--rule-w); }
.blob { --ink: #000; --rule: rgba(0,0,255,.28); --rule-w: 1px; }
.k { --ink: #999; --rule: rgba(0,0,255,.75); --rule-w: 1.300px; }
.item.blob, .item.k { --rule: rgba(20,20,150,.5); --rule-w: 6px; }
.item.k { --ink: #606060; }

.vbar { width: 14px; border: 1px solid #9a9993; display: flex; flex-direction: column; justify-content: space-between; background: #dbdad5; }
.vbar i { height: 13px; border-bottom: 2px solid #9a9993; background: #e8e7e3; }
.vbar i + i { border-bottom: 0; border-top: 2px solid #9a9993; }
.vbar i::after { content: ""; display: block; margin: 4px auto 0; width: 0; border: 3px solid transparent; border-bottom: 3px solid #666; border-top: 0; }
.vbar i + i::after { border-top: 3px solid #666; border-bottom: 0; }
.view { width: 720px; display: flex; flex-direction: column; margin-left: 5px; position: relative; }
.canvas { height: 1076px; background: #b5b4b0; padding-left: 2px; }
.canvas::before { content: ""; display: table; }
.sheet { width: 716px; border: 1px solid #000; background: #fff; box-shadow: 1px 2px 1px rgba(0,0,0,.5); }
.blob .sheet { height: 893px; margin-top: 91px; }
.k .sheet { height: 1020px; margin-top: 28px; }
.sheet text { font: 17px "Liberation Serif", serif; text-anchor: middle; }
.note { position: absolute; left: 11px; top: 11px; width: 207px; height: 24px; border: 1px solid #222; border-radius: 8px; background: #dbdad5; display: flex; align-items: center; gap: 5px; padding-left: 5px; line-height: 22px; }
.pages { display: flex; align-items: center; height: 27px; padding-left: 301px; }
.pages b { font-weight: normal; width: 17px; height: 23px; line-height: 20px; background: #fbfbfb; border: 1px solid #8f8b83; text-align: center; margin: 0 8px 0 10px; }
.pages span { word-spacing: 5px; width: 42px; line-height: 20px; }
```
FILE: app.js
```
var HEX = "0123456789ABCDEF".split("");
document.getElementById("hex").innerHTML = HEX.map(function (h) { return "<span>" + h + "</span>"; }).join("");

var CONTROLS = {
  0x80: "XXX XXX BPH NBH IND NEL SSA ESA HTS HTJ VTS PLD PLU RI SS2 SS3".split(" "),
  0x90: "DCS PU1 PU2 STS CCH MW SPA EPA SOS XXX SCI CSI ST OSC PM APC".split(" ")
};

function cell(base, i) {
  var code = base + i;
  if (base === 0x10) return "<b></b>";
  if (CONTROLS[base]) return '<b class="ctl"><i>' + CONTROLS[base][i] + "</i></b>";
  if (code === 0xA0) return '<b class="ctl"><i class="two">NB SP</i></b>';
  if (code === 0xAD || code === 0x20) return "<b></b>";
  if (code === 0x7F) return "<b>\u2421</b>";
  return "<b" + (code === 0x42 ? ' class="on"' : "") + ">&#" + code + ";</b>";
}

var rows = "";
for (var base = 0x10; base <= 0xF0; base += 16) {
  var label = base === 0x10 ? "" : ("0000" + base.toString(16).toUpperCase()).slice(-4);
  rows += '<div class="row"><span>' + label + "</span>" + HEX.map(function (_, i) { return cell(base, i); }).join("") + "</div>";
}
document.getElementById("table").innerHTML = rows;

var DOCS = {
  blob: { h: 891, thumb: 134, marks: [[99, 127, "8"]] },
  k: { h: 1018, thumb: 153, marks: [[205, 100, "2"], [561, 131, "4"], [281, 456, "5"], [587, 793, "7"], [205, 811, "1"], [107, 813, "6"], [108, 813, "3"]] }
};

function mode(cls, icon, name) { return '<div class="mode ' + cls + '">' + icon + name + "</div>"; }

document.querySelectorAll(".okular").forEach(function (win) {
  var kind = win.dataset.doc, doc = DOCS[kind];
  var menu = [["File", 39], ["Edit", 41], ["View", 47], ["Go", 35], ["Bookmarks", 84], ["Tools", 48], ["Settings", 66], ["Help", 40]];
  var marks = doc.marks.map(function (m) {
    return '<text x="' + m[0] + '" y="' + m[1] + '">' + m[2] + '</text><circle cx="' + m[0] + '" cy="' + (m[1] + 2) + '" r="1.200"/>';
  }).join("");
  win.classList.add(kind);
  win.innerHTML =
    '<div class="title"><svg width="18" height="18"><use href="#i-okular"/></svg>' + win.dataset.name + " — Okular" +
    '<svg class="wm" width="64" height="12" viewBox="0 0 64 12"><path d="M5 10V4M1.500 6L5 2.500 8.500 6" stroke="#a5a4a1" stroke-width="2.500" fill="none"/><path d="M20 10h6" stroke="#a5a4a1" stroke-width="2"/><path d="M36.500 5h6v5h-6zM39 4V1.500h6v5h-2" stroke="#a5a4a1" stroke-width="1.400" fill="none"/><path d="M55 2l8 8M63 2l-8 8" stroke="#a5a4a1" stroke-width="2.200"/></svg></div>' +
    '<div class="menu">' + menu.map(function (m) { return '<span style="width:' + m[1] + 'px">' + m[0] + "</span>"; }).join("") + "</div>" +
    '<div class="tools">' +
    '<svg width="34" height="24" viewBox="0 0 34 24"><path d="M14 2h12l2 2v12l-6 6H14z" fill="#ecebe8" stroke="#b8b7b3"/><path d="M22 22v-6h6z" fill="#ddd" stroke="#b8b7b3"/><path d="M8.500 2.500h10v15h-10z" fill="#d6d5d1" stroke="#bbb"/><path d="M17 5v10l-7-5z" fill="#8a8a86"/></svg><span class="dim" style="width:53px">Previous</span>' +
    '<svg width="34" height="24" viewBox="0 0 34 24"><path d="M8 2h12l2 2v12l-6 6H8z" fill="#ecebe8" stroke="#b8b7b3"/><path d="M16 22v-6h6z" fill="#ddd" stroke="#b8b7b3"/><path d="M18.500 2.500h9v15h-9z" fill="#d6d5d1" stroke="#bbb"/><path d="M19 5v10l7-5z" fill="#8a8a86"/></svg><span class="dim" style="width:39px">Next</span>' +
    '<i class="sep"></i><div class="combo">Fit Width<svg width="14" height="11" viewBox="0 0 14 11"><path d="M0 5.500L5 0h9v11H5z" fill="#222"/><path d="M6.500 3l5 5M11.500 3l-5 5" stroke="#fff" stroke-width="1.800"/></svg><i></i></div>' +
    '<svg width="31" height="22" viewBox="-7 0 31 22"><use href="#i-zoom" width="20" height="22"/><path d="M5 8h6" stroke="#456" stroke-width="1.300"/></svg><span style="width:63px">Zoom Out</span>' +
    '<svg width="32" height="22" viewBox="-7 0 32 22"><use href="#i-zoom" width="20" height="22"/><path d="M5 8h6M8 5v6" stroke="#456" stroke-width="1.300"/></svg><span style="width:58px">Zoom In</span>' +
    '<i class="sep"></i><svg width="36" height="22" viewBox="0 0 36 22"><rect x="14" y="1" width="13" height="20" rx="6" fill="#e3e2df" stroke="#b2b1ad"/><path d="M20.500 1v8" stroke="#999"/><rect x="19" y="4" width="3" height="6" rx="1.500" fill="#c27870"/></svg><span style="width:52px">Browse</span>' +
    '<svg width="29" height="24" viewBox="0 0 29 24"><path d="M3.500 2.500h18v20h-18z" fill="#f6f6f4" stroke="#b5b5b1"/><path d="M6.500 4v15M5 17l1.500 2L8 17" stroke="#5a94dc" fill="none"/><use href="#i-zoom" x="6" y="2" width="18" height="21"/></svg><span style="width:33px">Zoom</span>' +
    '<div class="textsel"><svg width="18" height="20" viewBox="0 0 18 20"><path d="M1.500 1v18M16.500 1v18M0 17.500h18" stroke="#a9c6ea" fill="none"/><path d="M3 2h12.500v4h-1.200q-.5-2.300-3-2.300v9.800q0 1.200 2 1.500v1H5.500v-1q2-.3 2-1.500V3.700Q4.800 3.700 4.200 6H3z" fill="#4c4c4a"/></svg><span>Text Selection</span><i></i></div></div>' +
    '<div class="body"><div class="modes">' +
    mode("off", '<svg width="34" height="36" viewBox="0 0 34 36" style="margin-top:14px"><path d="M.5 1.500h33v4H.5zM.5 10.500h26v4H.5zM.5 19.500h21v4H.5zM.5 28.500h31v4H.5z" fill="#f4f3f0" stroke="#b0afab"/></svg>', "Contents") +
    mode("sel", '<svg width="46" height="36" viewBox="0 0 46 36" style="margin-top:12px"><path d="M1 1h44v34H1z" fill="#fff" stroke="#666"/><path d="M2.500 2.500h41v31h-41z" fill="url(#sky)"/><path d="M4 2.500h30q2 12-10 20h-9Q4 15 4 2.500z" fill="#b5309c"/><path d="M4 2.500h6l6 20h-2Q6 14 4 8zM22 2.500h6l-6 18h-3z" fill="#e0557c"/><path d="M6 8l6-4 3 8-4 3zM27 4l6 3-5 8-3-3z" fill="#d8c84c"/><path d="M14 18h9l-2 6-4 5h-3v-3l2-2z" fill="#2a2430"/><path d="M13 28h5v5h-5z" fill="#a07038"/></svg>', "Thumbnails") +
    mode("", '<svg width="48" height="50" viewBox="0 0 48 50" style="margin-top:4px"><ellipse cx="24" cy="47" rx="22" ry="1.800" fill="#d8d8d6"/><path d="M4 47L9 36 42 2l5 4-33 35z" fill="#f5bd2c"/><path d="M11 38.500L44 4" stroke="#222" stroke-width="2.800"/><path d="M4 47l5-11 5 5z" fill="#e6d6a8"/><path d="M4 47l2-4.500 2.200 2z" fill="#111"/><path d="M42 2q2-2 4.500 0T47 6l-3 3-5-4z" fill="#1a1a1a"/></svg>', "Reviews") +
    mode("", '<svg width="48" height="46" viewBox="0 0 48 46" style="margin-top:7px"><path d="M24 1.500q1.500 0 2.500 2l5 11 12.500 2q3 .7 1 3L36 28l2.500 14q0 3-2.500 2l-12-5.500L12 44q-2.500 1-2.500-2L12 28l-9-8.500q-2-2.300 1-3l12.500-2 5-11q1-2 2.500-2z" fill="url(#gold)" stroke="#b56a1c" stroke-width="1.500"/></svg>', "Bookmarks") +
    '</div><div class="pane"><h3>Thumbnails</h3><div class="filter"><i></i><svg width="26" height="24" viewBox="0 0 26 24"><path d="M1 2h15l-5 8v12H7V10z" fill="#e6e5e2" stroke="#bdbcb8"/><ellipse cx="8.500" cy="2.500" rx="7.500" ry="1.800" fill="#a5a4a0"/><path d="M16 13h7l-3.500 4z" fill="#666"/></svg></div>' +
    '<div class="lists"><div class="list"><div class="item ' + kind + '"><svg style="height:' + doc.thumb + 'px"><use href="#i-' + kind + '-draw"/></svg>1</div></div><div class="vbar"><i></i><i></i></div></div></div>' +
    '<div class="view"><div class="canvas"><div class="sheet"><svg width="714" height="' + doc.h + '"><use href="#i-' + kind + '-draw"/>' + marks + "</svg></div></div>" +
    '<div class="note"><svg width="14" height="14" viewBox="0 0 14 14"><circle cx="7" cy="7" r="6.800" fill="url(#blue)"/><path d="M6 2.500h2.200v2H6zM5 6h3.200v4.500h1V12H5v-1.500h1v-3H5z" fill="#fff"/></svg>Loaded a one-page document.</div>' +
    '<div class="pages"><svg width="12" height="18" viewBox="0 0 12 18"><path d="M12 0v18L0 9z" fill="url(#steel)"/></svg><b>1</b><span>of 1</span><svg width="12" height="18" viewBox="0 0 12 18"><path d="M0 0v18l12-9z" fill="url(#steel)"/></svg></div></div></div>';
});
```
